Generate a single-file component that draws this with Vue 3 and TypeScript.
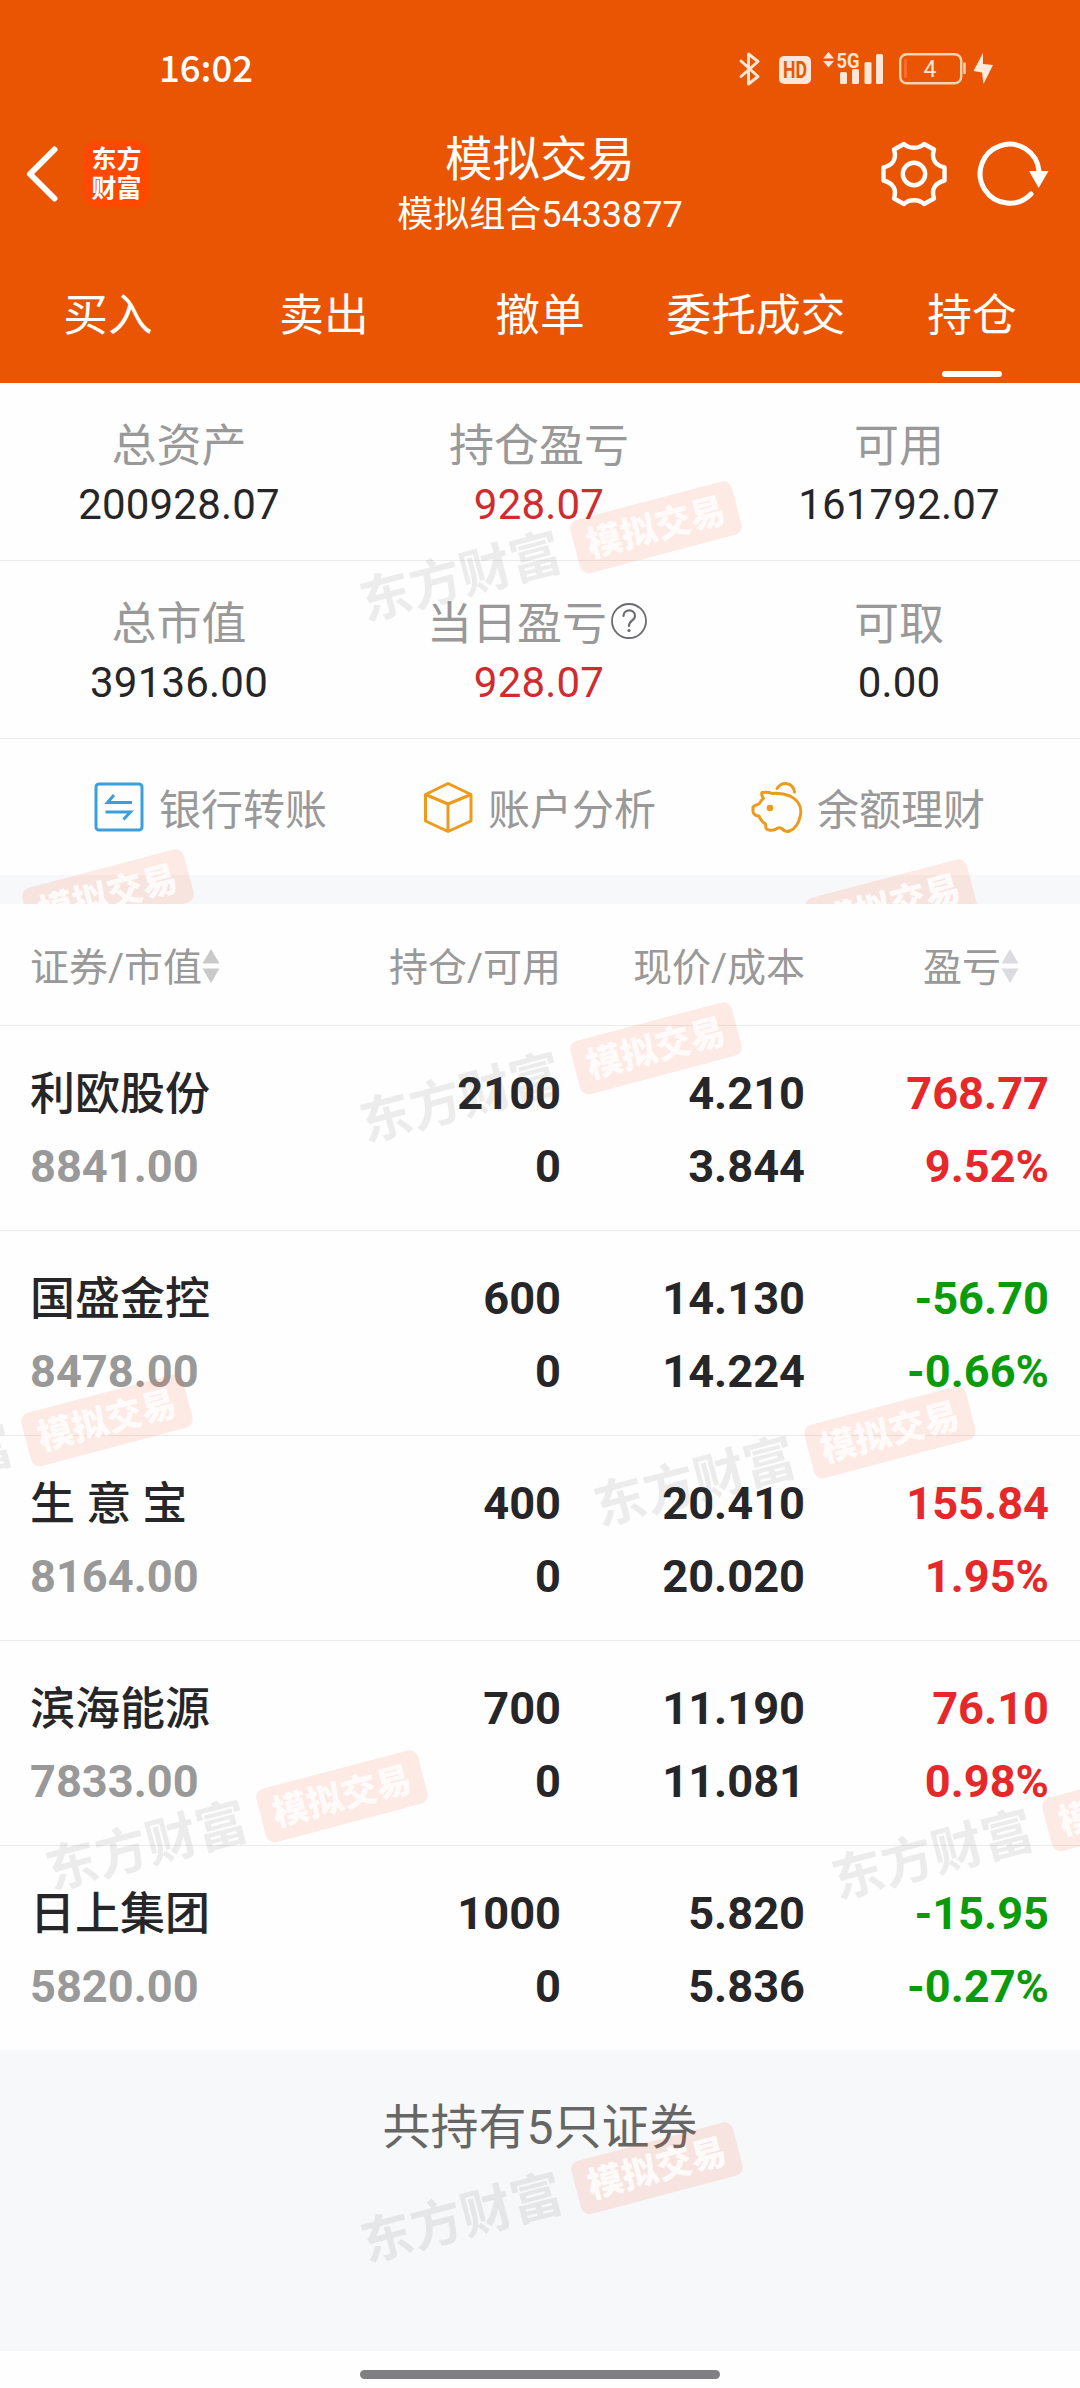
<script setup lang="ts">
interface Stat {
  label: string
  value: string
  up?: boolean
  help?: boolean
}
interface Holding {
  name: string
  value: string
  amount: string
  usable: string
  price: string
  cost: string
  profit: string
  rate: string
}
interface Mark {
  x: number
  y: number
  pillOnly?: boolean
}

const tabs: string[] = ['买入', '卖出', '撤单', '委托成交', '持仓']
const activeTab = '持仓'

const stats: Stat[][] = [
  [
    { label: '总资产', value: '200928.07' },
    { label: '持仓盈亏', value: '928.07', up: true },
    { label: '可用', value: '161792.07' },
  ],
  [
    { label: '总市值', value: '39136.00' },
    { label: '当日盈亏', value: '928.07', up: true, help: true },
    { label: '可取', value: '0.00' },
  ],
]

const holdings: Holding[] = [
  { name: '利欧股份', value: '8841.00', amount: '2100', usable: '0', price: '4.210', cost: '3.844', profit: '768.77', rate: '9.52%' },
  { name: '国盛金控', value: '8478.00', amount: '600', usable: '0', price: '14.130', cost: '14.224', profit: '-56.70', rate: '-0.66%' },
  { name: '生 意 宝', value: '8164.00', amount: '400', usable: '0', price: '20.410', cost: '20.020', profit: '155.84', rate: '1.95%' },
  { name: '滨海能源', value: '7833.00', amount: '700', usable: '0', price: '11.190', cost: '11.081', profit: '76.10', rate: '0.98%' },
  { name: '日上集团', value: '5820.00', amount: '1000', usable: '0', price: '5.820', cost: '5.836', profit: '-15.95', rate: '-0.27%' },
]

// Watermark centres, relative to the section they are stamped on
const topMarks: Mark[] = [
  { x: 549, y: 172 },
  { x: 1, y: 540, pillOnly: true },
  { x: 784, y: 550, pillOnly: true },
]
const listMarks: Mark[] = [
  { x: 549, y: 172 },
  { x: 0, y: 544 },
  { x: 783, y: 556 },
  { x: 235, y: 920 },
  { x: 1021, y: 929 },
  { x: 550, y: 1292 },
]
</script>

<template>
  <div class="screen">
    <header class="header">
      <div class="status">
        <span class="time">16:02</span>
        <svg class="status-icons" width="260" height="40" viewBox="737 49 260 40" fill="none">
          <path d="M742 61 L759 76.500 L749.500 84 V54 L759 61.500 L742 76.500" stroke="#ffe6d6" stroke-width="3" stroke-linejoin="round" stroke-linecap="round" />
          <rect x="780" y="56" width="32" height="28" rx="5" fill="#ffe6d6" />
          <text x="784" y="78" class="hd" fill="#ea5504" textLength="24" lengthAdjust="spacingAndGlyphs">HD</text>
          <path d="M824 58.500 L829.500 52 L835 58.500 Z M824 61 L829.500 67.500 L835 61 Z" fill="#ffe6d6" />
          <text x="837.500" y="67.500" class="net" fill="#ffe6d6" textLength="23" lengthAdjust="spacingAndGlyphs">5G</text>
          <g fill="#ffe6d6">
            <rect x="841" y="72" width="7" height="12" rx="1.500" />
            <rect x="853" y="69" width="7" height="15" rx="1.500" />
            <rect x="865.500" y="62" width="7" height="22" rx="1.500" />
            <rect x="877" y="54" width="7" height="30" rx="1.500" />
          </g>
          <rect x="901.200" y="54.200" width="61" height="29" rx="6.500" stroke="#ffd2b0" stroke-width="2.400" />
          <rect x="905" y="59" width="3" height="19" rx="1" fill="#ff6a2a" />
          <path d="M965.500 63.500 V73" stroke="#ffd2b0" stroke-width="2.400" stroke-linecap="round" />
          <text x="931" y="76.500" text-anchor="middle" class="level" fill="#ffe6d6">4</text>
          <path d="M984 53 L974.500 71 L983 72.500 L984.500 84 L994 65 L984 64 Z" fill="#ffeadc" />
        </svg>
      </div>

      <div class="nav">
        <div class="nav-left">
          <svg width="34" height="60" viewBox="0 0 34 60" fill="none">
            <path d="M29.500 5.500 L5 30 L29.500 54.500" stroke="#fff" stroke-width="6" stroke-linecap="round" stroke-linejoin="round" />
          </svg>
          <div class="logo"><span>东方</span><span>财富</span></div>
        </div>
        <div class="titles">
          <div class="title">模拟交易</div>
          <div class="subtitle">模拟组合5433877</div>
        </div>
        <div class="nav-right">
          <svg width="68" height="68" viewBox="-34 -34 68 68" fill="none" stroke="#fff" stroke-width="4.400" stroke-linejoin="round">
            <circle r="11.200" />
            <path d="M-10 -30 C-5 -25 5 -25 10 -30 L20 -24.500 C17 -15 21 -9 30.500 -6.500 V6.500 C21 9 17 15 20 24.500 L10 30 C5 25 -5 25 -10 30 L-20 24.500 C-17 15 -21 9 -30.500 6.500 V-6.500 C-21 -9 -17 -15 -20 -24.500 Z" />
          </svg>
          <svg width="76" height="68" viewBox="0 0 76 68" fill="none">
            <path d="M64 31 A29.500 29.500 0 1 0 56 54" stroke="#fff" stroke-width="5" stroke-linecap="round" />
            <path d="M54 31 H73.500 L63.700 48 Z" fill="#fff" />
          </svg>
        </div>
      </div>

      <nav class="tabs">
        <div v-for="t in tabs" :key="t" class="tab" :class="{ active: t === activeTab }">{{ t }}</div>
      </nav>
    </header>

    <section class="top">
      <div v-for="(row, i) in stats" :key="i" class="stat-row">
        <div v-for="s in row" :key="s.label" class="stat">
          <div class="stat-label">
            <span>{{ s.label }}</span>
            <svg v-if="s.help" class="help" width="38" height="38" viewBox="0 0 38 38" fill="none" stroke="#6b6b70" stroke-width="1.800">
              <circle cx="19" cy="19" r="17" />
              <path d="M13.500 14 C13.500 6.500 25 6.500 25 14 C25 18.500 19 18.500 19 24" stroke-width="2.200" stroke-linecap="round" />
              <circle cx="19" cy="28.500" r="1.600" fill="#6b6b70" stroke="none" />
            </svg>
          </div>
          <div class="stat-value" :class="{ red: s.up }">{{ s.value }}</div>
        </div>
      </div>

      <div class="actions">
        <div class="action">
          <svg width="52" height="54" viewBox="0 0 52 54" fill="none" stroke="#3a9fdd" stroke-width="3">
            <rect x="3" y="4" width="46" height="46" rx="3" />
            <path d="M39 22.500 H14.500 L21 15" />
            <path d="M12.500 32 H37.500 L30.500 39.500" />
          </svg>
          <span>银行转账</span>
        </div>
        <div class="action">
          <svg width="52" height="54" viewBox="0 0 52 54" fill="none" stroke="#ee9a1c" stroke-width="3" stroke-linejoin="round">
            <path d="M26 3.500 L49 14.500 V41 L26 51.500 L3.500 41 V14.500 Z M3.500 14.500 L26 24 L49 14.500 M26 24 V51.500" />
          </svg>
          <span>账户分析</span>
        </div>
        <div class="action">
          <svg width="52" height="54" viewBox="0 0 52 54" fill="none" stroke="#ee9a1c" stroke-width="3" stroke-linejoin="round" stroke-linecap="round">
            <path d="M11 12.500 C15 12 19 12.500 21 13.500 C27 13 33 13.500 39 16 C47 20 51 27 49.500 35 C48 43 44 49 38.500 51 C35 52.500 33 51 31.500 49 C29.500 47.500 27 47.500 25 49 C21 51.500 15.500 50 15 48 L14.500 44 C11.500 42 9 39 8 36 C5 36 2 34 2 31.500 V27 C4 24.500 7 25 8.500 23.500 C9.500 21.500 10 20 12.500 18.500 C11 16.500 10 14.500 11 12.500 Z" />
            <path d="M26 8.500 C31 1 42 2 43.500 12" />
            <circle cx="19" cy="28" r="3.300" fill="#ee9a1c" stroke="none" />
          </svg>
          <span>余额理财</span>
        </div>
      </div>
      <div class="band"></div>

      <div class="marks">
        <div v-for="(m, i) in topMarks" :key="i" class="mark" :style="{ left: m.x + 'px', top: m.y + 'px' }">
          <span v-if="!m.pillOnly" class="mark-name">东方财富</span><span class="mark-pill">模拟交易</span>
        </div>
      </div>
    </section>

    <section class="list">
      <div class="thead">
        <div class="col-name">
          证券/市值<svg class="sort" width="18" height="36" viewBox="0 0 18 36" fill="#c9c9c9"><path d="M9 1 L17.500 15.500 H0.500 Z M9 35 L17.500 20.500 H0.500 Z" /></svg>
        </div>
        <div class="col">持仓/可用</div>
        <div class="col">现价/成本</div>
        <div class="col sort-col">
          盈亏<svg class="sort" width="18" height="36" viewBox="0 0 18 36" fill="#dcdce0"><path d="M9 1 L17.500 15.500 H0.500 Z M9 35 L17.500 20.500 H0.500 Z" /></svg>
        </div>
      </div>

      <div v-for="h in holdings" :key="h.name" class="row">
        <div class="col-name"><div class="name">{{ h.name }}</div><div class="gray">{{ h.value }}</div></div>
        <div class="col"><div>{{ h.amount }}</div><div>{{ h.usable }}</div></div>
        <div class="col"><div>{{ h.price }}</div><div>{{ h.cost }}</div></div>
        <div class="col" :class="h.profit.startsWith('-') ? 'down' : 'up'"><div>{{ h.profit }}</div><div>{{ h.rate }}</div></div>
      </div>

      <div class="footer">共持有5只证券</div>

      <div class="marks">
        <div v-for="(m, i) in listMarks" :key="i" class="mark" :style="{ left: m.x + 'px', top: m.y + 'px' }">
          <span class="mark-name">东方财富</span><span class="mark-pill">模拟交易</span>
        </div>
      </div>
    </section>

    <div class="home"><div class="home-bar"></div></div>
  </div>
</template>

<style>
body {
  margin: 0;
  background: #fefefe;
}
</style>

<style scoped>
.screen {
  width: 1080px;
  height: 2388px;
  overflow: hidden;
  display: flex;
  flex-direction: column;
  background: #fefefe;
  color: #262628;
  font-family: Roboto, "Noto Sans CJK SC", sans-serif;
}
.screen svg {
  display: block;
  flex: none;
}
.header {
  height: 383px;
  background: #ea5504;
  color: #fff;
}
.status {
  height: 130px;
  box-sizing: border-box;
  padding: 8px 84px 0 159px;
  display: flex;
  align-items: center;
  justify-content: space-between;
}
.time {
  padding-bottom: 5px;
  font: 500 36.500px/50px "Noto Sans CJK SC", sans-serif;
}
.hd {
  font: 700 24px Roboto, sans-serif;
}
.net {
  font: 700 21px Roboto, sans-serif;
}
.level {
  font: 400 23px Roboto, sans-serif;
}
.nav {
  height: 120px;
  display: grid;
  grid-template-columns: 1fr auto 1fr;
}
.nav-left,
.nav-right {
  height: 88px;
  display: flex;
  align-items: center;
}
.nav-left {
  padding-left: 25px;
  gap: 25px;
}
.nav-right {
  justify-content: flex-end;
  padding-right: 29px;
  gap: 27px;
}
.logo {
  width: 65px;
  height: 66px;
  border-radius: 13px;
  background: #ff4800;
  display: flex;
  flex-direction: column;
  align-items: center;
  justify-content: center;
  font-size: 25px;
  font-weight: 700;
  line-height: 29px;
}
.titles {
  text-align: center;
  padding-top: 2px;
}
.title {
  font-size: 47.500px;
  line-height: 56px;
}
.subtitle {
  margin-top: 3px;
  font-size: 36px;
  line-height: 48px;
}
.tabs {
  height: 133px;
  display: grid;
  grid-template-columns: repeat(5, 1fr);
}
.tab {
  position: relative;
  text-align: center;
  font-size: 44.700px;
  line-height: 132px;
}
.tab.active::after {
  content: "";
  position: absolute;
  left: 78px;
  bottom: 6px;
  width: 60px;
  height: 6px;
  border-radius: 3px;
  background: #fff;
}
.top {
  position: relative;
  height: 521px;
  overflow: hidden;
}
.stat-row {
  height: 178px;
  box-sizing: border-box;
  padding-top: 39px;
  border-bottom: 1px solid #ebebeb;
  display: grid;
  grid-template-columns: repeat(3, 360px);
  text-align: center;
}
.stat {
  padding-right: 2px;
}
.stat-label {
  display: flex;
  align-items: center;
  justify-content: center;
  font-size: 45px;
  line-height: 50px;
  color: #999;
}
.help {
  margin: -8px 3px 0 3px;
}
.stat-value {
  margin-top: 8px;
  font-size: 42px;
  line-height: 50px;
  letter-spacing: 0.200px;
}
.red {
  color: #d02c30;
}
.actions {
  height: 136px;
  padding-left: 93px;
  display: grid;
  grid-template-columns: repeat(3, 329px);
  align-items: center;
}
.action {
  display: flex;
  align-items: center;
  gap: 14px;
  font-size: 42px;
  line-height: 60px;
  color: #999;
}
.action span {
  padding-top: 7px;
}
.band {
  height: 29px;
  background: #f7f8f9;
}
.list {
  position: relative;
  height: 1448px;
  overflow: hidden;
}
.thead,
.row {
  box-sizing: border-box;
  display: grid;
  grid-template-columns: 300px 231px 244px 244px;
  padding-left: 30px;
  border-bottom: 1px solid #ebebeb;
}
.thead {
  height: 122px;
  padding-top: 7px;
  align-items: center;
  font-size: 39px;
  line-height: 50px;
  color: #999;
}
.col {
  text-align: right;
}
.thead .col-name,
.sort-col {
  display: flex;
  align-items: center;
}
.sort-col {
  justify-content: flex-end;
  padding-right: 30px;
}
.sort {
  margin: -5px 0 0 0;
}
.row {
  height: 205px;
  padding-top: 38px;
  font-size: 45.200px;
  font-weight: 700;
  line-height: 60px;
}
.row .col-name,
.row .col {
  display: flex;
  flex-direction: column;
  gap: 13px;
}
.name {
  position: relative;
  top: 1px;
  font-size: 45px;
  font-weight: 500;
}
.gray {
  color: #999;
}
.up {
  color: #e6282a;
}
.down {
  color: #0a9b0a;
}
.footer {
  height: 301px;
  margin-top: -1px;
  box-sizing: border-box;
  padding-top: 48px;
  background: #f7f8fa;
  text-align: center;
  font-size: 48px;
  line-height: 60px;
  color: #666;
}
.marks {
  position: absolute;
  inset: 0;
  overflow: hidden;
  pointer-events: none;
}
.mark {
  position: absolute;
  width: 388px;
  height: 56px;
  margin: -28px 0 0 -194px;
  display: flex;
  align-items: center;
  justify-content: flex-end;
  gap: 15px;
  transform: rotate(-14.800deg);
  white-space: nowrap;
}
.mark-name {
  font-size: 51.500px;
  font-weight: 700;
  line-height: 56px;
  color: rgba(90, 90, 90, 0.11);
}
.mark-pill {
  width: 167px;
  height: 55px;
  border-radius: 9px;
  background: rgba(245, 90, 40, 0.12);
  color: rgba(255, 255, 255, 0.85);
  text-align: center;
  font-size: 35.500px;
  font-weight: 900;
  line-height: 57px;
}
.home {
  height: 36px;
  display: flex;
  justify-content: center;
  align-items: center;
  background: #fefefe;
}
.home-bar {
  width: 360px;
  height: 9px;
  margin-top: 9px;
  border-radius: 5px;
  background: #808082;
}
</style>
